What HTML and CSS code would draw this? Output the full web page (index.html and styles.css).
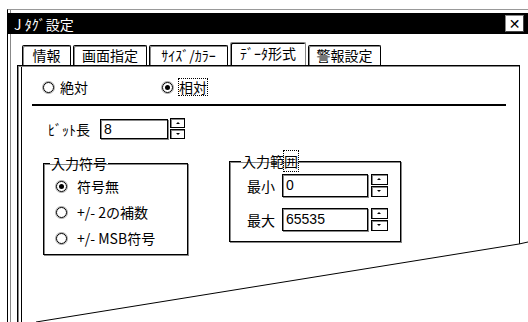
FILE: index.html
```html
<!DOCTYPE html>
<html lang="ja">
<head>
  <meta charset="UTF-8">
  <title>Jﾀｸﾞ設定</title>
  <link rel="stylesheet" href="styles.css">
</head>
<body>

  <div class="window">
    <div class="titlebar">
      <span class="title">J ﾀｸﾞ設定</span>
      <span class="close">✕</span>
    </div>

    <div class="tabs">
      <div class="tab t1">情報</div>
      <div class="tab t2">画面指定</div>
      <div class="tab t3">ｻｲｽﾞ/ｶﾗｰ</div>
      <div class="tab active t4">ﾃﾞｰﾀ形式</div>
      <div class="tab t5">警報設定</div>
    </div>

    <div class="panel">
      <div class="mode-row">
        <label class="radio-item"><span class="radio"></span>絶対</label>
        <label class="radio-item second"><span class="radio checked"></span><span class="focus">相対</span></label>
      </div>

      <div class="rule"></div>

      <div class="bit-row">
        <span class="label">ﾋﾞｯﾄ長</span>
        <span class="input w-bit">8</span>
        <span class="spin"><span class="up"></span><span class="down"></span></span>
      </div>

      <div class="groups">
        <fieldset class="group sign">
          <legend>入力符号</legend>
          <label class="radio-item"><span class="radio checked"></span>符号無</label>
          <label class="radio-item"><span class="radio"></span>+/- 2の補数</label>
          <label class="radio-item"><span class="radio"></span>+/- MSB符号</label>
        </fieldset>

        <fieldset class="group range">
          <legend>入力範<span class="focus">囲</span></legend>
          <div class="range-row">
            <span class="label">最小</span>
            <span class="input w-range">0</span>
            <span class="spin"><span class="up"></span><span class="down"></span></span>
          </div>
          <div class="range-row">
            <span class="label">最大</span>
            <span class="input w-range">65535</span>
            <span class="spin"><span class="up"></span><span class="down"></span></span>
          </div>
        </fieldset>
      </div>
    </div>
  </div>

  <!-- torn edge of the screenshot -->
  <svg class="tear" width="528" height="322" viewBox="0 0 528 322">
    <polygon points="36,322 519,244 528,242 528,322" fill="#fff"/>
    <polyline points="36,322 519,244 528,242" fill="none" stroke="#000" stroke-width="1"/>
  </svg>

</body>
</html>
```

FILE: styles.css
```css
* {
  box-sizing: border-box;
}

body {
  margin: 0;
  background: #fff;
  font-family: "Noto Sans CJK JP", "DejaVu Sans", sans-serif;
  font-size: 14px;
  line-height: 16px;
  color: #000;
  width: 528px;
  height: 322px;
  overflow: hidden;
  position: relative;
}

.window {
  margin: 9px 0 0 7px;
  width: 521px;
  height: 313px;
  border-top: 1px solid #999;
  border-left: 1px solid #000;
  box-shadow: inset 2px 0 0 #fff, inset 3px 0 0 #888;
}

.titlebar {
  height: 21px;
  margin-top: 3px;
  background: #000;
  color: #fff;
  display: flex;
  align-items: center;
  justify-content: space-between;
  padding: 0 4px 0 6px;
}

.close {
  width: 19px;
  height: 17px;
  background: #fff;
  color: #000;
  border: 1px solid #888;
  border-right-color: #444;
  border-bottom-color: #444;
  font-size: 14px;
  font-weight: bold;
  line-height: 15px;
  text-align: center;
}

.tabs {
  display: flex;
  margin: 8px 0 0 14px;
  height: 23px;
  align-items: flex-end;
}

.tab {
  height: 20px;
  border: 1px solid #000;
  border-bottom: none;
  box-shadow: inset 1px 1px 0 #888;
  border-radius: 2px 2px 0 0;
  margin-right: 2px;
  line-height: 19px;
  text-align: center;
}

.t1 { width: 49px; }
.t2 { width: 74px; }
.t3 { width: 79px; }
.t4 { width: 76px; }
.t5 { width: 73px; }

.tab.active {
  height: 23px;
  border-color: #888;
  box-shadow: inset 1px 1px 0 #000;
  line-height: 20px;
}

.panel {
  margin-left: 9px;
  width: 503px;
  height: 258px;
  border-top: 1px solid #000;
  border-left: 1px solid #000;
  border-right: 1px solid #000;
  box-shadow: inset 1px 1px 0 #888, inset 3px 0 0 #fff, inset 4px 0 0 #000;
  padding-top: 13px;
}

.radio-item {
  display: flex;
  align-items: center;
  gap: 6px;
  height: 16px;
}

.radio {
  width: 11px;
  height: 11px;
  border-radius: 50%;
  border: 1px solid #000;
  box-shadow: 0 0 0 1px #aaa;
  position: relative;
  flex: none;
}

.radio.checked::after {
  content: "";
  position: absolute;
  left: 2px;
  top: 2px;
  width: 5px;
  height: 5px;
  border-radius: 50%;
  background: #000;
}

.focus {
  outline: 1px dotted #000;
}

.mode-row {
  display: flex;
  padding-left: 25px;
}

.mode-row .second {
  margin-left: 74px;
}

.rule {
  margin: 9px 0 0 14px;
  width: 474px;
  height: 2px;
  background: #000;
}

.bit-row,
.range-row {
  display: flex;
  align-items: center;
}

.bit-row {
  margin: 12px 0 0 30px;
}

.bit-row .label {
  width: 52px;
}

.input {
  border: 1px solid #000;
  box-shadow: inset 1px 1px 0 #888, 1px 1px 0 #888;
  padding-left: 3px;
  font-family: "Liberation Sans", sans-serif;
  font-size: 14px;
}

.w-bit {
  width: 68px;
  height: 20px;
  line-height: 18px;
}

.w-range {
  width: 86px;
  height: 23px;
  line-height: 21px;
  margin-left: 7px;
}

.spin {
  display: flex;
  flex-direction: column;
  gap: 1px;
  margin-left: 2px;
}

.spin span {
  width: 15px;
  height: 10px;
  border: 1px solid #000;
  box-shadow: inset 1px 1px 0 #888;
  position: relative;
}

.range .spin {
  margin-left: 3px;
}

.range .spin span {
  width: 17px;
  height: 11px;
}

.spin span::after {
  content: "";
  position: absolute;
  left: 5px;
  top: 3px;
  border-left: 2px solid transparent;
  border-right: 2px solid transparent;
}

.spin .up::after {
  border-bottom: 2px solid #000;
}

.spin .down::after {
  border-top: 2px solid #000;
}

.groups {
  display: flex;
  align-items: flex-start;
  margin: 14px 0 0 25px;
  gap: 41px;
}

.group {
  margin: 0;
  border: 1px solid #000;
  box-shadow: inset 1px 1px 0 #888, 1px 1px 0 #888;
}

.group legend {
  padding: 0 1px;
  margin-left: -6px;
  line-height: 16px;
}

.sign {
  margin-top: 2px;
  width: 145px;
  height: 100px;
  padding: 7px 8px 0 12px;
  display: flex;
  flex-direction: column;
  gap: 10px;
}

.sign .radio-item {
  gap: 10px;
}

.range {
  width: 172px;
  height: 89px;
  padding: 5px 0 0 17px;
}

.range-row + .range-row {
  margin-top: 11px;
}

.tear {
  position: absolute;
  left: 0;
  top: 0;
}
```
